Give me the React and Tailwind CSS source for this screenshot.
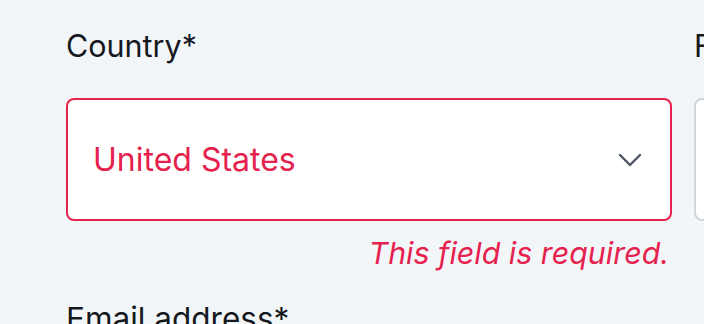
import React from "react";

export default function App() {
    return (
        <div
            className="w-[704px] h-[324px] overflow-hidden bg-[#f3f6f9]"
            style={{ fontFamily: "Inter, 'Noto Sans', sans-serif" }}
        >
            <div className="grid grid-cols-[606px_300px] gap-x-[22px] pl-[66px] pt-[26px]">
                {/* Country */}
                <div>
                    <label className="block text-[30.5px] leading-[40px] text-[#15191e]">Country*</label>
                    <div className="mt-[32px] h-[123px] flex items-center justify-between rounded-[8px] border-2 border-[#e5224e] bg-white pl-[25px] pr-[28px]">
                        <span className="text-[32px] leading-[40px] text-[#e5224e]">United States</span>
                        <svg width="24" height="14" viewBox="0 0 24 14" fill="none">
                            <path d="M2 2 L12 12 L22 2" stroke="#4b5563" strokeWidth="2.4" strokeLinecap="round" strokeLinejoin="round" />
                        </svg>
                    </div>
                    <p className="mt-[12px] pr-[3px] text-right text-[30.4px] leading-[40px] italic text-[#e5224e]">
                        This field is required.
                    </p>
                </div>

                {/* next column, cut off */}
                <div>
                    <label className="block text-[30.5px] leading-[40px] text-[#15191e]">Field*</label>
                    <div className="mt-[32px] h-[123px] rounded-[8px] border-2 border-[#cfd6de] bg-white" />
                </div>

                <div className="col-span-2 mt-[26px]">
                    <label className="block text-[31.5px] leading-[40px] text-[#15191e]">Email address*</label>
                </div>
            </div>
        </div>
    );
}
